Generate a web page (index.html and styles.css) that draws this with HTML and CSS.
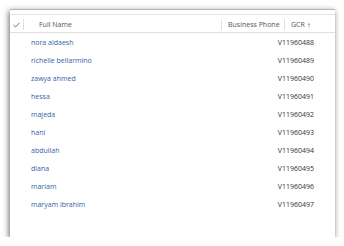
FILE: index.html
```html
<!DOCTYPE html>
<html lang="en">
<head>
    <meta charset="UTF-8">
    <meta name="viewport" content="width=device-width, initial-scale=1.0">
    <title>Contacts</title>
    <link rel="stylesheet" href="styles.css">
</head>
<body>
    <div class="card">
        <div class="grid">
            <div class="head">
                <div class="cell check">
                    <svg width="7" height="6" viewBox="0 0 7 6"><path d="M0.5 3.2 L2.5 5 L6.5 0.8" fill="none" stroke="#666" stroke-width="0.9"/></svg>
                </div>
                <div class="cell name-h">Full Name</div>
                <div class="cell phone-h">Business Phone</div>
                <div class="cell gcr-h">GCR <span class="arrow">&#8593;</span></div>
            </div>
            <div class="row"><span class="name">nora aldaesh</span><span class="gcr">V11960488</span></div>
            <div class="row"><span class="name">richelle bellarmino</span><span class="gcr">V11960489</span></div>
            <div class="row"><span class="name">zawya ahmed</span><span class="gcr">V11960490</span></div>
            <div class="row"><span class="name">hessa</span><span class="gcr">V11960491</span></div>
            <div class="row"><span class="name">majeda</span><span class="gcr">V11960492</span></div>
            <div class="row"><span class="name">hani</span><span class="gcr">V11960493</span></div>
            <div class="row"><span class="name">abdullah</span><span class="gcr">V11960494</span></div>
            <div class="row"><span class="name">diana</span><span class="gcr">V11960495</span></div>
            <div class="row"><span class="name">mariam</span><span class="gcr">V11960496</span></div>
            <div class="row"><span class="name">maryam ibrahim</span><span class="gcr">V11960497</span></div>
        </div>
    </div>
</body>
</html>
```

FILE: styles.css
```css
body {
    margin: 0;
    background-color: #fff;
    font-family: "Open Sans", "Noto Sans", sans-serif;
    font-size: 7px;
}
.card {
    margin: 9px 9px 0 10px;
    width: 325px;
    height: 228px;
    background-color: #fff;
    border-top: 1px solid #b5b5b5;
    box-shadow: -1px 2px 6px rgba(0,0,0,0.6);
    padding-top: 4px;
    box-sizing: border-box;
}
.grid {
    border-top: 1px solid #e4e4e4;
}
.head {
    display: grid;
    grid-template-columns: 14px 197px 63px 51px;
    height: 17px;
    border-bottom: 1px solid #e0e0e0;
    color: #555;
}
.cell {
    display: flex;
    align-items: center;
}
.check {
    justify-content: center;
    border-right: 1px solid #e0e0e0;
    margin: 4px 0;
}
.name-h {
    padding-left: 15px;
}
.phone-h {
    padding-left: 6px;
    border-left: 1px solid #e0e0e0;
    margin: 4px 0;
}
.gcr-h {
    padding-left: 6px;
    border-left: 1px solid #e0e0e0;
    margin: 4px 0;
}
.arrow {
    margin-left: 2px;
    font-size: 8px;
}
.row {
    display: flex;
    justify-content: space-between;
    align-items: center;
    height: 18px;
    padding: 0 21px 0 21px;
}
.name {
    color: #3560a8;
}
.gcr {
    color: #333;
}
```
